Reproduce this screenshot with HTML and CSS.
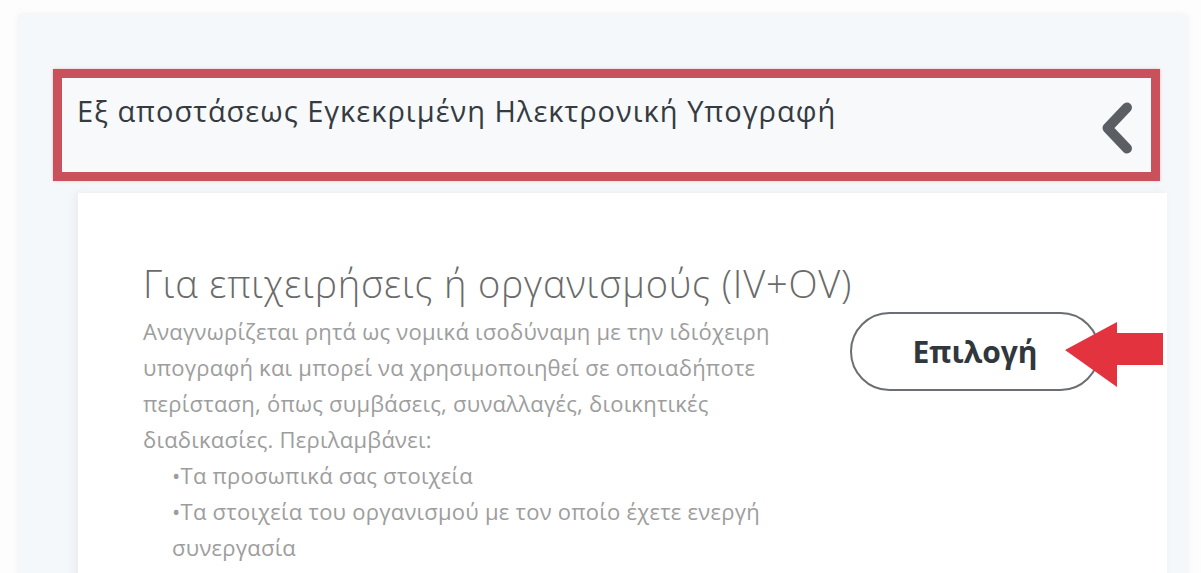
FILE: index.html
```html
<!DOCTYPE html>
<html lang="el">
<head>
<meta charset="utf-8">
<title>Εξ αποστάσεως Εγκεκριμένη Ηλεκτρονική Υπογραφή</title>
<link rel="stylesheet" href="styles.css">
</head>
<body>
  <div class="panel">
    <div class="acc-head">
      <h2 class="acc-title">Εξ αποστάσεως Εγκεκριμένη Ηλεκτρονική Υπογραφή</h2>
      <svg class="chevron" width="34" height="52" viewBox="0 0 34 52" aria-hidden="true">
        <path d="M27 5.5 L7.5 26 L27 46.5" fill="none" stroke="#5b5f63" stroke-width="10" stroke-linecap="round" stroke-linejoin="round"/>
      </svg>
    </div>

    <section class="card">
      <h3 class="option-title">Για επιχειρήσεις ή οργανισμούς (IV+OV)</h3>
      <div class="option-row">
        <div class="option-text">
          <p class="option-desc">Αναγνωρίζεται ρητά ως νομικά ισοδύναμη με την ιδιόχειρη υπογραφή και μπορεί να χρησιμοποιηθεί σε οποιαδήποτε περίσταση, όπως συμβάσεις, συναλλαγές, διοικητικές διαδικασίες. Περιλαμβάνει:</p>
          <ul class="option-list">
            <li>Τα προσωπικά σας στοιχεία</li>
            <li>Τα στοιχεία του οργανισμού με τον οποίο έχετε ενεργή συνεργασία</li>
          </ul>
        </div>
        <div class="option-action">
          <button class="btn-select" type="button">Επιλογή</button>
          <svg class="pointer-arrow" width="98" height="65" viewBox="0 0 98 65" aria-hidden="true">
            <polygon points="0,28 52,0 52,11 98,11 98,43 52,43 52,65" fill="#e3333e"/>
          </svg>
        </div>
      </div>
    </section>
  </div>
</body>
</html>
```

FILE: styles.css
```css
html, body {
  margin: 0;
  padding: 0;
  height: 100%;
  overflow: hidden;
  background: #fdfdfd;
  font-family: "Open Sans", "Noto Sans", "DejaVu Sans", sans-serif;
}

/* light page panel that holds the accordion */
.panel {
  margin: 15px 14px 0 19px;
  padding: 54px 20px 0 34px;
  min-height: 600px;
  background: #f5f8fa;
  box-shadow: 0 0 6px rgba(200, 210, 220, 0.35);
}

/* accordion header, highlighted with a red frame */
.acc-head {
  display: flex;
  align-items: center;
  justify-content: space-between;
  height: 94px;
  margin-right: 7px;
  border: 9px solid #c9515b;
  background: #f7f9fb;
  box-shadow: 0 0 3px rgba(220, 90, 100, 0.35);
}

.acc-title {
  align-self: flex-start;
  margin: 14px 0 0 15px;
  font-size: 29px;
  line-height: 38px;
  letter-spacing: 1px;
  font-weight: 400;
  color: #353b41;
}

.chevron {
  margin: 6px 17px 0 0;
}

/* option card */
.card {
  margin: 12px 0 0 25px;
  padding: 68px 0 0 65px;
  min-height: 420px;
  background: #ffffff;
  box-shadow: -3px 0 8px rgba(170, 185, 200, 0.18);
}

.option-title {
  margin: 0;
  font-size: 38px;
  line-height: 44px;
  letter-spacing: 0.8px;
  font-weight: 300;
  color: #6a6a6a;
}

.option-row {
  display: flex;
  align-items: flex-start;
  margin-top: 8px;
}

.option-text {
  width: 660px;
  color: #9d9d9d;
  font-size: 22px;
  line-height: 36px;
  letter-spacing: 0.25px;
}

.option-desc {
  margin: 0;
}

.option-list {
  list-style: none;
  margin: 0;
  padding: 0 0 0 29px;
}

.option-list li::before {
  content: "•";
}

.option-action {
  position: relative;
  margin-left: 47px;
}

.btn-select {
  display: flex;
  align-items: center;
  justify-content: center;
  width: 250px;
  height: 79px;
  margin-top: -1px;
  border: 2px solid #6b6f73;
  border-radius: 40px;
  background: #ffffff;
  font-family: inherit;
  font-size: 30px;
  font-weight: 700;
  color: #30373d;
}

/* red pointer drawn over the button edge */
.pointer-arrow {
  position: absolute;
  left: 215px;
  top: 9px;
}
```
